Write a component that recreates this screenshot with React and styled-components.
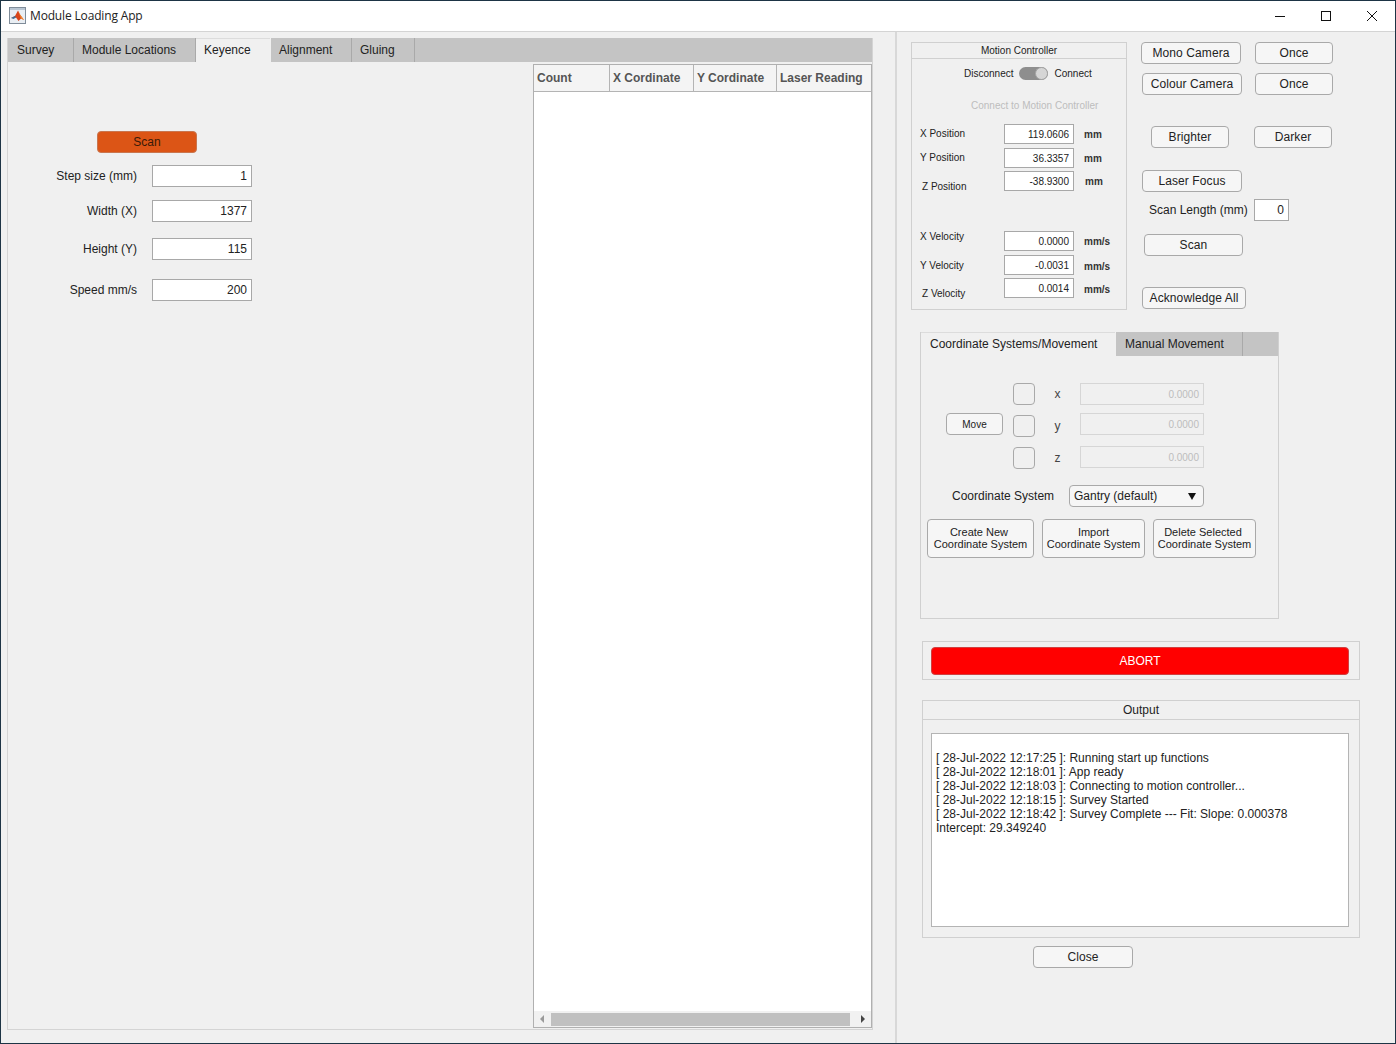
import React from 'react';
import styled, { createGlobalStyle } from 'styled-components';

const GlobalStyle = createGlobalStyle`
  html, body {
    margin: 0;
    padding: 0;
    background: #f0f0f0;
  }
  * {
    box-sizing: border-box;
  }
`;

const Window = styled.div`
  width: 1396px;
  height: 1044px;
  display: flex;
  flex-direction: column;
  overflow: hidden;
  background: #f0f0f0;
  border: 1px solid #1d3445;
  font-family: "Liberation Sans", Arial, sans-serif;
  font-size: 12px;
  color: #222;
`;

const TitleBar = styled.div`
  height: 31px;
  flex: none;
  display: flex;
  align-items: center;
  background: #fff;
  border-bottom: 1px solid #d4d4d4;
  padding-left: 8px;
`;

const TitleText = styled.div`
  margin: 0 0 2px 4px;
  font-family: "Open Sans", sans-serif;
  font-size: 12px;
  letter-spacing: -0.16px;
  color: #222;
`;

const WindowControls = styled.div`
  margin-left: auto;
  display: flex;
`;

const WindowControl = styled.div`
  width: 46px;
  height: 30px;
  display: flex;
  align-items: center;
  justify-content: center;
`;

const Body = styled.div`
  flex: 1;
  display: flex;
  min-height: 0;
`;

const LeftPane = styled.div`
  width: 896px;
  flex: none;
  padding: 6px 0 0 6px;
  border-right: 2px solid #d8d8d8;
`;

const RightPane = styled.div`
  flex: 1;
  padding: 10px 0 0 14px;
  min-width: 0;
`;

const TabGroup = styled.div`
  width: 866px;
  height: 992px;
  display: flex;
  flex-direction: column;
  border: 1px solid #d4d4d4;
  border-top: 0;
`;

const TabBar = styled.div`
  height: 24px;
  flex: none;
  display: flex;
  background: #c4c4c4;
`;

const Tab = styled.div`
  width: ${(p) => p.$width}px;
  height: 100%;
  flex: none;
  display: flex;
  align-items: center;
  padding: 0 0 1px ${(p) => p.$pad || 8}px;
  font-size: 12px;
  color: #222;
  background: ${(p) => (p.$active ? '#f0f0f0' : 'transparent')};
  box-shadow: ${(p) => (p.$active ? 'inset 0 1px #dcdcdc' : 'none')};
  border-right: 1px solid ${(p) => (p.$active ? '#f0f0f0' : '#a9a9a9')};
`;

const KeyenceContent = styled.div`
  flex: 1;
  display: flex;
  min-height: 0;
`;

const FormColumn = styled.div`
  width: 525px;
  flex: none;
  padding-top: 69px;
`;

const ScanButton = styled.div`
  width: 100px;
  height: 22px;
  margin-left: 89px;
  display: flex;
  align-items: center;
  justify-content: center;
  background: #dc5516;
  border: 1px solid #c9764f;
  border-radius: 4px;
  color: #3a1a08;
`;

const FormRow = styled.div`
  display: flex;
  align-items: center;
  margin-top: ${(p) => p.$top}px;
`;

const FormLabel = styled.div`
  width: 129px;
  margin-right: 15px;
  text-align: right;
`;

const NumberInput = styled.div`
  width: ${(p) => p.$width || 100}px;
  height: 22px;
  display: flex;
  align-items: center;
  justify-content: flex-end;
  padding-right: 4px;
  background: #fff;
  border: 1px solid #a8a8a8;
`;

const Table = styled.div`
  width: 339px;
  margin-top: 2px;
  margin-bottom: 1px;
  display: flex;
  flex-direction: column;
  background: #fff;
  border: 1px solid #b0b0b0;
`;

const TableHeader = styled.div`
  height: 27px;
  flex: none;
  display: flex;
  background: #f4f4f4;
  border-bottom: 1px solid #b4b4b4;
`;

const HeaderCell = styled.div`
  width: ${(p) => p.$width}px;
  flex: none;
  display: flex;
  align-items: center;
  padding-left: 3px;
  font-weight: bold;
  color: #555;
  border-right: 1px solid #b4b4b4;
  &:last-child {
    border-right: 0;
  }
`;

const TableBody = styled.div`
  flex: 1;
`;

const ScrollBar = styled.div`
  height: 16px;
  flex: none;
  display: flex;
  align-items: center;
  background: #f1f1f1;
  padding: 0 6px;
`;

const ScrollThumb = styled.div`
  width: 299px;
  height: 13px;
  margin: 0 auto 0 7px;
  background: #c0c0c0;
`;

const Arrow = styled.div`
  width: 0;
  height: 0;
  flex: none;
  border-top: 4px solid transparent;
  border-bottom: 4px solid transparent;
  ${(p) =>
    p.$left
      ? 'border-right: 4px solid #9a9a9a;'
      : 'border-left: 4px solid #444;'}
`;

const TopRow = styled.div`
  display: flex;
  align-items: flex-start;
`;

const Panel = styled.div`
  width: ${(p) => p.$width}px;
  height: ${(p) => p.$height}px;
  margin-left: ${(p) => p.$left || 0}px;
  margin-top: ${(p) => p.$top || 0}px;
  border: 1px solid #d0d0d0;
`;

const PanelTitle = styled.div`
  height: ${(p) => p.$height}px;
  display: flex;
  align-items: center;
  justify-content: center;
  font-size: ${(p) => p.$size}px;
  border-bottom: 1px solid #d0d0d0;
`;

const ToggleRow = styled.div`
  display: flex;
  align-items: center;
  height: 13px;
  margin-top: 8px;
  padding-left: 52px;
  font-size: 10px;
`;

const ToggleTrack = styled.div`
  width: 29px;
  height: 13px;
  margin: 0 6px;
  display: flex;
  justify-content: flex-end;
  background: #8e8e8e;
  border-radius: 7px;
`;

const ToggleKnob = styled.div`
  width: 13px;
  height: 13px;
  background: #d6d6d6;
  border: 1px solid #a4a4a4;
  border-radius: 50%;
`;

const StatusLine = styled.div`
  height: 12px;
  margin: 20px 0 12px 59px;
  font-size: 10px;
  line-height: 12px;
  color: #bdbdbd;
`;

const ReadoutRow = styled.div`
  display: flex;
  align-items: flex-start;
  height: 20px;
  margin-top: ${(p) => p.$top || 0}px;
`;

const ReadoutLabel = styled.div`
  width: 92px;
  flex: none;
  margin-top: ${(p) => p.$top}px;
  padding-left: ${(p) => p.$left}px;
  font-size: 10px;
  line-height: 12px;
`;

const ReadoutValue = styled.div`
  width: 70px;
  height: 20px;
  flex: none;
  display: flex;
  align-items: center;
  justify-content: flex-end;
  padding-right: 4px;
  background: #fff;
  border: 1px solid #a8a8a8;
  font-size: 10px;
`;

const ReadoutUnit = styled.div`
  margin: ${(p) => p.$top}px 0 0 ${(p) => p.$left || 10}px;
  font-size: 10px;
  line-height: 12px;
  font-weight: bold;
  color: #333;
`;

const ButtonColumn = styled.div`
  margin-left: 14px;
  display: flex;
  flex-direction: column;
`;

const ButtonRow = styled.div`
  display: flex;
  align-items: center;
  margin-top: ${(p) => p.$top || 0}px;
  padding-left: ${(p) => p.$left || 0}px;
`;

const Button = styled.div`
  width: ${(p) => p.$width}px;
  height: ${(p) => p.$height || 22}px;
  flex: none;
  margin-right: ${(p) => p.$gap || 0}px;
  padding-bottom: ${(p) => (p.$height ? 2 : 0)}px;
  display: flex;
  align-items: center;
  justify-content: center;
  text-align: center;
  font-size: ${(p) => p.$size || 12}px;
  line-height: ${(p) => (p.$height ? '12px' : 'normal')};
  letter-spacing: ${(p) => (p.$size ? 0 : 0.1)}px;
  color: #222;
  background: #f6f6f6;
  border: 1px solid #a9a9a9;
  border-radius: 4px;
`;

const ScanLengthLabel = styled.div`
  width: 99px;
  margin-right: 6px;
  white-space: nowrap;
`;

const MovePanel = styled.div`
  width: 359px;
  height: 287px;
  margin: 22px 0 0 9px;
  display: flex;
  flex-direction: column;
  border: 1px solid #d0d0d0;
  border-top: 0;
`;

const MoveContent = styled.div`
  flex: 1;
  padding-top: 27px;
`;

const MoveGrid = styled.div`
  display: grid;
  grid-template-columns: 67px 22px 45px 124px;
  grid-template-rows: repeat(3, 22px);
  row-gap: 10px;
  padding-left: 25px;
`;

const MoveButton = styled(Button)`
  grid-column: 1;
  grid-row: 2;
  margin-top: -2px;
`;

const AxisCheck = styled.div`
  grid-column: 2;
  grid-row: ${(p) => p.$row};
  width: 22px;
  height: 22px;
  background: #f0f0f0;
  border: 1px solid #a9a9a9;
  border-radius: 4px;
`;

const AxisLabel = styled.div`
  grid-column: 3;
  grid-row: ${(p) => p.$row};
  display: flex;
  align-items: center;
  justify-content: center;
  color: #444;
`;

const AxisInput = styled.div`
  grid-column: 4;
  grid-row: ${(p) => p.$row};
  height: 22px;
  margin-top: ${(p) => p.$top}px;
  display: flex;
  align-items: center;
  justify-content: flex-end;
  padding-right: 4px;
  font-size: 10px;
  color: #bdbdbd;
  background: #f0f0f0;
  border: 1px solid #d6d6d6;
`;

const CoordinateRow = styled.div`
  display: flex;
  align-items: center;
  margin-top: 16px;
  padding-left: 31px;
`;

const CoordinateLabel = styled.div`
  width: 102px;
  margin-right: 15px;
  white-space: nowrap;
`;

const Dropdown = styled.div`
  width: 135px;
  height: 22px;
  display: flex;
  align-items: center;
  justify-content: space-between;
  padding: 0 7px 0 4px;
  background: #f6f6f6;
  border: 1px solid #a9a9a9;
  border-radius: 4px;
`;

const DropdownArrow = styled.div`
  width: 0;
  height: 0;
  border-left: 4px solid transparent;
  border-right: 4px solid transparent;
  border-top: 7px solid #111;
`;

const AbortPanel = styled(Panel)`
  padding: 5px 10px 5px 8px;
`;

const AbortButton = styled.div`
  height: 28px;
  display: flex;
  align-items: center;
  justify-content: center;
  color: #fff;
  background: #ff0000;
  border: 1px solid #d04040;
  border-radius: 4px;
`;

const LogBox = styled.div`
  width: 418px;
  height: 194px;
  margin: 13px 0 0 8px;
  padding: 17px 4px 0;
  background: #fff;
  border: 1px solid #b4b4b4;
  line-height: 14px;
  color: #222;
  white-space: pre-line;
`;

const CloseRow = styled(ButtonRow)`
  padding-left: 122px;
`;

function MatlabIcon() {
  return (
    <svg width="17" height="17" viewBox="0 0 17 17" style={{ marginBottom: 1 }}>
      <rect x="0.5" y="0.5" width="16" height="16" fill="#e9eef3" stroke="#7f8c99" />
      <rect x="1" y="1" width="15" height="2" fill="#b9c6d3" />
      <path d="M2 11 L6 9 L9 3.5 L11 7.5 L15 13 L12 11.5 L9.5 14 L7 10.5 Z" fill="#d9451a" />
      <path d="M2 11 L6 9 L7 10.5 L4.5 12 Z" fill="#3f6d96" />
      <path d="M9 3.5 L11 7.5 L15 13 L12 11.5 Z" fill="#f08a30" />
    </svg>
  );
}

function MinimizeIcon() {
  return (
    <svg width="12" height="12" viewBox="0 0 12 12">
      <path d="M1 6.5 H11" stroke="#111" strokeWidth="1" />
    </svg>
  );
}

function MaximizeIcon() {
  return (
    <svg width="12" height="12" viewBox="0 0 12 12">
      <rect x="1.5" y="1.5" width="9" height="9" fill="none" stroke="#111" strokeWidth="1" />
    </svg>
  );
}

function CloseIcon() {
  return (
    <svg width="12" height="12" viewBox="0 0 12 12">
      <path d="M1 1 L11 11 M11 1 L1 11" stroke="#111" strokeWidth="1" />
    </svg>
  );
}

const mainTabs = [
  { name: 'Survey', width: 66, pad: 9 },
  { name: 'Module Locations', width: 122 },
  { name: 'Keyence', width: 75, active: true },
  { name: 'Alignment', width: 81 },
  { name: 'Gluing', width: 63 },
];

const formRows = [
  { label: 'Step size (mm)', value: '1', top: 12 },
  { label: 'Width (X)', value: '1377', top: 13 },
  { label: 'Height (Y)', value: '115', top: 16 },
  { label: 'Speed mm/s', value: '200', top: 19 },
];

const tableColumns = [
  { name: 'Count', width: 76 },
  { name: 'X Cordinate', width: 84 },
  { name: 'Y Cordinate', width: 83 },
  { name: 'Laser Reading', width: 94 },
];

const positionRows = [
  { label: 'X Position', value: '119.0606', unit: 'mm', top: 0, labelTop: 4, labelLeft: 8, unitTop: 5 },
  { label: 'Y Position', value: '36.3357', unit: 'mm', top: 4, labelTop: 4, labelLeft: 8, unitTop: 5 },
  { label: 'Z Position', value: '-38.9300', unit: 'mm', top: 3, labelTop: 10, labelLeft: 10, unitTop: 5, unitLeft: 11 },
  { label: 'X Velocity', value: '0.0000', unit: 'mm/s', top: 40, labelTop: 0, labelLeft: 8, unitTop: 5 },
  { label: 'Y Velocity', value: '-0.0031', unit: 'mm/s', top: 4, labelTop: 5, labelLeft: 8, unitTop: 6 },
  { label: 'Z Velocity', value: '0.0014', unit: 'mm/s', top: 3, labelTop: 10, labelLeft: 10, unitTop: 6 },
];

const axes = [
  { name: 'x', row: 1, top: 0 },
  { name: 'y', row: 2, top: -2 },
  { name: 'z', row: 3, top: -1 },
];

const logText = `[ 28-Jul-2022 12:17:25 ]: Running start up functions
[ 28-Jul-2022 12:18:01 ]: App ready
[ 28-Jul-2022 12:18:03 ]: Connecting to motion controller...
[ 28-Jul-2022 12:18:15 ]: Survey Started
[ 28-Jul-2022 12:18:42 ]: Survey Complete --- Fit: Slope: 0.000378
Intercept: 29.349240`;

function App() {
  return (
    <Window>
      <GlobalStyle />
      <TitleBar>
        <MatlabIcon />
        <TitleText>Module Loading App</TitleText>
        <WindowControls>
          <WindowControl><MinimizeIcon /></WindowControl>
          <WindowControl><MaximizeIcon /></WindowControl>
          <WindowControl><CloseIcon /></WindowControl>
        </WindowControls>
      </TitleBar>
      <Body>
        <LeftPane>
          <TabGroup>
            <TabBar>
              {mainTabs.map((t) => (
                <Tab key={t.name} $width={t.width} $pad={t.pad} $active={t.active}>
                  {t.name}
                </Tab>
              ))}
            </TabBar>
            <KeyenceContent>
              <FormColumn>
                <ScanButton>Scan</ScanButton>
                {formRows.map((r) => (
                  <FormRow key={r.label} $top={r.top}>
                    <FormLabel>{r.label}</FormLabel>
                    <NumberInput>{r.value}</NumberInput>
                  </FormRow>
                ))}
              </FormColumn>
              <Table>
                <TableHeader>
                  {tableColumns.map((c) => (
                    <HeaderCell key={c.name} $width={c.width}>{c.name}</HeaderCell>
                  ))}
                </TableHeader>
                <TableBody />
                <ScrollBar>
                  <Arrow $left />
                  <ScrollThumb />
                  <Arrow />
                </ScrollBar>
              </Table>
            </KeyenceContent>
          </TabGroup>
        </LeftPane>
        <RightPane>
          <TopRow>
            <Panel $width={216} $height={268}>
              <PanelTitle $height={16} $size={10}>Motion Controller</PanelTitle>
              <ToggleRow>
                <span>Disconnect</span>
                <ToggleTrack><ToggleKnob /></ToggleTrack>
                <span>Connect</span>
              </ToggleRow>
              <StatusLine>Connect to Motion Controller</StatusLine>
              {positionRows.map((r) => (
                <ReadoutRow key={r.label} $top={r.top}>
                  <ReadoutLabel $top={r.labelTop} $left={r.labelLeft}>{r.label}</ReadoutLabel>
                  <ReadoutValue>{r.value}</ReadoutValue>
                  <ReadoutUnit $top={r.unitTop} $left={r.unitLeft}>{r.unit}</ReadoutUnit>
                </ReadoutRow>
              ))}
            </Panel>
            <ButtonColumn>
              <ButtonRow>
                <Button $width={100} $gap={14}>Mono Camera</Button>
                <Button $width={78}>Once</Button>
              </ButtonRow>
              <ButtonRow $top={9} $left={1}>
                <Button $width={100} $gap={13}>Colour Camera</Button>
                <Button $width={78}>Once</Button>
              </ButtonRow>
              <ButtonRow $top={31} $left={10}>
                <Button $width={78} $gap={25}>Brighter</Button>
                <Button $width={78}>Darker</Button>
              </ButtonRow>
              <ButtonRow $top={22} $left={1}>
                <Button $width={100}>Laser Focus</Button>
              </ButtonRow>
              <ButtonRow $top={7} $left={8}>
                <ScanLengthLabel>Scan Length (mm)</ScanLengthLabel>
                <NumberInput $width={35}>0</NumberInput>
              </ButtonRow>
              <ButtonRow $top={13} $left={3}>
                <Button $width={99}>Scan</Button>
              </ButtonRow>
              <ButtonRow $top={31} $left={1}>
                <Button $width={104}>Acknowledge All</Button>
              </ButtonRow>
            </ButtonColumn>
          </TopRow>
          <MovePanel>
            <TabBar>
              <Tab $width={195} $pad={9} $active>Coordinate Systems/Movement</Tab>
              <Tab $width={127} $pad={9}>Manual Movement</Tab>
            </TabBar>
            <MoveContent>
              <MoveGrid>
                <MoveButton $width={57} $size={10}>Move</MoveButton>
                {axes.map((a) => (
                  <React.Fragment key={a.name}>
                    <AxisCheck $row={a.row} />
                    <AxisLabel $row={a.row}>{a.name}</AxisLabel>
                    <AxisInput $row={a.row} $top={a.top}>0.0000</AxisInput>
                  </React.Fragment>
                ))}
              </MoveGrid>
              <CoordinateRow>
                <CoordinateLabel>Coordinate System</CoordinateLabel>
                <Dropdown>
                  Gantry (default)
                  <DropdownArrow />
                </Dropdown>
              </CoordinateRow>
              <ButtonRow $top={12} $left={6}>
                <Button $width={107} $height={39} $size={11} $gap={8}>{'Create New\u00a0'}<br />Coordinate System</Button>
                <Button $width={103} $height={39} $size={11} $gap={8}>Import<br />Coordinate System</Button>
                <Button $width={103} $height={39} $size={11}>{'Delete Selected\u00a0'}<br />Coordinate System</Button>
              </ButtonRow>
            </MoveContent>
          </MovePanel>
          <AbortPanel $width={438} $height={39} $left={11} $top={22}>
            <AbortButton>ABORT</AbortButton>
          </AbortPanel>
          <Panel $width={438} $height={238} $left={11} $top={20}>
            <PanelTitle $height={19} $size={12}>Output</PanelTitle>
            <LogBox>{logText}</LogBox>
          </Panel>
          <CloseRow $top={8}>
            <Button $width={100}>Close</Button>
          </CloseRow>
        </RightPane>
      </Body>
    </Window>
  );
}

export default App;
